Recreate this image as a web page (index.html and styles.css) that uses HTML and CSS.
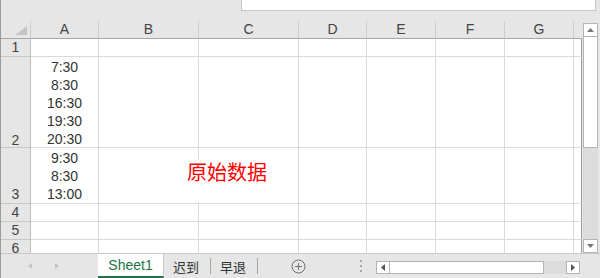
FILE: index.html
```html
<!DOCTYPE html>
<html>
<head>
    <title>Sheet1</title>
    <link rel="stylesheet" href="styles.css">
</head>
<body>
    <div class="app">
        <div class="topbar">
            <div class="formula"></div>
        </div>

        <div class="main">
            <div class="grid-wrap">
                <div class="sheet">
                    <!-- column headers -->
                    <div class="corner">
                        <svg width="12" height="9" viewBox="0 0 12 9"><polygon points="12,0 12,9 0,9" fill="#c4c4c4"/></svg>
                    </div>
                    <div class="col">A</div>
                    <div class="col">B</div>
                    <div class="col">C</div>
                    <div class="col">D</div>
                    <div class="col">E</div>
                    <div class="col">F</div>
                    <div class="col">G</div>
                    <div class="col last"></div>

                    <!-- row 1 -->
                    <div class="row">1</div>
                    <div class="cell"></div><div class="cell"></div><div class="cell"></div><div class="cell"></div>
                    <div class="cell"></div><div class="cell"></div><div class="cell"></div><div class="cell last"></div>

                    <!-- row 2 -->
                    <div class="row tall">2</div>
                    <div class="cell times tall">
                        <span>7:30</span><span>8:30</span><span>16:30</span><span>19:30</span><span>20:30</span>
                    </div>
                    <div class="cell"></div><div class="cell"></div><div class="cell"></div>
                    <div class="cell"></div><div class="cell"></div><div class="cell"></div><div class="cell last"></div>

                    <!-- row 3 -->
                    <div class="row">3</div>
                    <div class="cell times">
                        <span>9:30</span><span>8:30</span><span>13:00</span>
                    </div>
                    <div class="cell"></div><div class="cell"></div><div class="cell"></div>
                    <div class="cell"></div><div class="cell"></div><div class="cell"></div><div class="cell last"></div>

                    <!-- row 4 -->
                    <div class="row">4</div>
                    <div class="cell"></div><div class="cell"></div><div class="cell"></div><div class="cell"></div>
                    <div class="cell"></div><div class="cell"></div><div class="cell"></div><div class="cell last"></div>

                    <!-- row 5 -->
                    <div class="row">5</div>
                    <div class="cell"></div><div class="cell"></div><div class="cell"></div><div class="cell"></div>
                    <div class="cell"></div><div class="cell"></div><div class="cell"></div><div class="cell last"></div>

                    <!-- row 6 (cut off) -->
                    <div class="row end">6</div>
                    <div class="cell end"></div><div class="cell end"></div><div class="cell end"></div><div class="cell end"></div>
                    <div class="cell end"></div><div class="cell end"></div><div class="cell end"></div><div class="cell last end"></div>
                </div>

                <!-- floating text box over B3:C3 -->
                <div class="note">原始数据</div>
            </div>

            <div class="vscroll">
                <div class="arrow">
                    <svg width="7" height="4" viewBox="0 0 7 4"><polygon points="0,4 7,4 3.5,0" fill="#777"/></svg>
                </div>
                <div class="vthumb"></div>
                <div class="vtrack"></div>
                <div class="arrow">
                    <svg width="7" height="4" viewBox="0 0 7 4"><polygon points="0,0 7,0 3.5,4" fill="#777"/></svg>
                </div>
            </div>
        </div>

        <div class="tabbar">
            <div class="tabnav">
                <svg width="4" height="6" viewBox="0 0 4 6"><polygon points="4,0 4,6 0,3" fill="#c4c4c4"/></svg>
                <svg width="4" height="6" viewBox="0 0 4 6"><polygon points="0,0 0,6 4,3" fill="#c4c4c4"/></svg>
            </div>
            <div class="tab active">Sheet1</div>
            <div class="tab">迟到</div>
            <div class="sep"></div>
            <div class="tab">早退</div>
            <div class="sep"></div>
            <div class="add">
                <svg width="15" height="15" viewBox="0 0 15 15">
                    <circle cx="7.5" cy="7.5" r="6.5" fill="none" stroke="#707070" stroke-width="1"/>
                    <path d="M7.5 4v7M4 7.5h7" stroke="#707070" stroke-width="1"/>
                </svg>
            </div>
            <div class="dots">
                <svg width="2" height="12" viewBox="0 0 2 12">
                    <rect x="0" y="0" width="2" height="2" fill="#a6a6a6"/>
                    <rect x="0" y="5" width="2" height="2" fill="#a6a6a6"/>
                    <rect x="0" y="10" width="2" height="2" fill="#a6a6a6"/>
                </svg>
            </div>
            <div class="hscroll">
                <div class="harrow">
                    <svg width="4" height="7" viewBox="0 0 4 7"><polygon points="4,0 4,7 0,3.5" fill="#555"/></svg>
                </div>
                <div class="hthumb"></div>
                <div class="htrack"></div>
                <div class="harrow">
                    <svg width="4" height="7" viewBox="0 0 4 7"><polygon points="0,0 0,7 4,3.5" fill="#555"/></svg>
                </div>
            </div>
        </div>
    </div>
</body>
</html>
```

FILE: styles.css
```css
body {
    margin: 0;
    width: 600px;
    height: 278px;
    overflow: hidden;
    background-color: #e6e6e6;
    font-family: "Liberation Sans", "Noto Sans CJK SC", sans-serif;
    color: #333;
}

.app {
    display: flex;
    flex-direction: column;
    height: 278px;
    border-left: 1px solid #9c9c9c;
}

.topbar {
    flex: none;
    height: 21px;
}

.formula {
    margin-left: 240px;
    width: 355px;
    height: 11px;
    box-sizing: border-box;
    background-color: #fff;
    border: 1px solid #c6c6c6;
    border-top: none;
}

.main {
    flex: none;
    display: flex;
    height: 232px;
}

.grid-wrap {
    position: relative;
    width: 581px;
}

.sheet {
    display: grid;
    grid-template-columns: 30px 68px 100px 100px 68px 69px 69px 69px 8px;
    grid-template-rows: 18px 18px 91px 56px 18px 18px 13px;
}

.sheet > div {
    box-sizing: border-box;
}

.corner,
.col {
    background-color: #e6e6e6;
    border-right: 1px solid #cdcdcd;
    border-bottom: 1px solid #a6a6a6;
}

.corner {
    display: flex;
    justify-content: flex-end;
    align-items: flex-end;
    padding: 0 3px 3px 0;
}

.col {
    text-align: center;
    font-size: 14px;
    line-height: 17px;
    color: #444;
}

.col.last {
    border-right: none;
}

.row {
    display: flex;
    justify-content: center;
    align-items: flex-end;
    background-color: #e6e6e6;
    border-right: 1px solid #bdbdbd;
    border-bottom: 1px solid #c8c8c8;
    font-size: 14px;
    line-height: 17px;
    color: #444;
}

.row.tall {
    line-height: 14px;
}

.row.end {
    align-items: flex-start;
    overflow: hidden;
}

.cell {
    background-color: #fff;
    border-right: 1px solid #dadada;
    border-bottom: 1px solid #dadada;
}

.cell.last {
    border-right-color: #9c9c9c;
}

.sheet .end {
    border-bottom: none;
}

.times {
    display: flex;
    flex-direction: column;
    justify-content: flex-end;
    align-items: center;
    font-size: 14px;
    line-height: 18px;
}

.times.tall {
    justify-content: flex-start;
    padding-top: 1px;
}

.note {
    position: absolute;
    left: 179px;
    top: 139px;
    width: 100px;
    height: 42px;
    padding-left: 7px;
    box-sizing: border-box;
    background-color: #fff;
    color: #ff0000;
    font-size: 20px;
    line-height: 26px;
}

.vscroll {
    display: flex;
    flex-direction: column;
    width: 15px;
    margin-left: 1px;
    padding-top: 2px;
}

.arrow {
    flex: none;
    display: flex;
    justify-content: center;
    align-items: center;
    height: 14px;
    box-sizing: border-box;
    background-color: #fff;
    border: 1px solid #b4b4b4;
}

.vthumb {
    flex: none;
    height: 111px;
    box-sizing: border-box;
    background-color: #fff;
    border: 1px solid #b4b4b4;
    border-top: none;
}

.vtrack {
    flex: 1;
    background-color: #dcdcdc;
}

.tabbar {
    flex: 1;
    display: flex;
    border-top: 1px solid #c8c8c8;
    font-size: 13px;
}

.tabnav {
    display: flex;
    align-items: center;
    gap: 23px;
    width: 97px;
    padding-left: 27px;
    box-sizing: border-box;
}

.tab {
    display: flex;
    align-items: center;
    padding: 0 11px 0 9px;
    color: #333;
}

.tab.active {
    justify-content: center;
    width: 66px;
    padding: 0;
    box-sizing: border-box;
    background-color: #fff;
    color: #217346;
    font-size: 14px;
    border-right: 1px solid #c8c8c8;
    border-bottom: 2px solid #217346;
}

.sep {
    align-self: center;
    width: 1px;
    height: 16px;
    background-color: #a6a6a6;
}

.add {
    align-self: center;
    display: flex;
    margin-left: 33px;
}

.dots {
    align-self: center;
    display: flex;
    margin-left: 54px;
}

.hscroll {
    align-self: flex-start;
    display: flex;
    width: 204px;
    height: 13px;
    margin-top: 7px;
    margin-left: 14px;
}

.harrow {
    display: flex;
    justify-content: center;
    align-items: center;
    width: 14px;
    box-sizing: border-box;
    background-color: #fff;
    border: 1px solid #b4b4b4;
}

.hthumb {
    width: 154px;
    box-sizing: border-box;
    background-color: #fff;
    border: 1px solid #b4b4b4;
    border-left: none;
}

.htrack {
    flex: 1;
    background-color: #dcdcdc;
}
```
